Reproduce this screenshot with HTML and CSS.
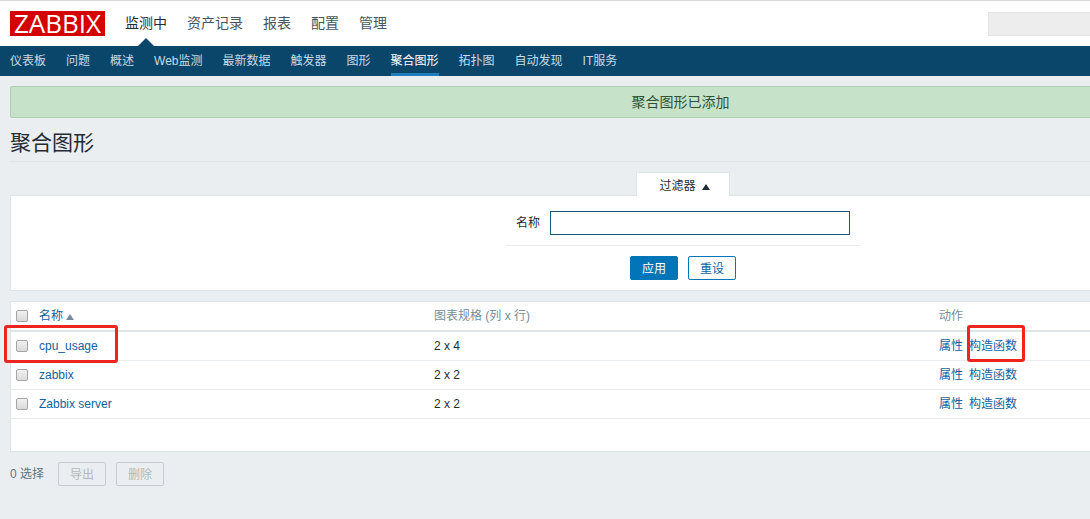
FILE: index.html
```html
<!DOCTYPE html>
<html lang="zh-CN">
<head>
<meta charset="utf-8">
<title>聚合图形</title>
<link rel="stylesheet" href="styles.css">
</head>
<body>
<div class="page">
  <header class="top-bar">
    <a class="logo" href="#">ZABBIX</a>
    <nav class="main-nav">
      <a class="current" href="#">监测中</a>
      <a href="#">资产记录</a>
      <a href="#">报表</a>
      <a href="#">配置</a>
      <a href="#">管理</a>
    </nav>
    <input class="search" type="search" aria-label="搜索">
  </header>
  <nav class="sub-nav">
    <a href="#">仪表板</a>
    <a href="#">问题</a>
    <a href="#">概述</a>
    <a href="#">Web监测</a>
    <a href="#">最新数据</a>
    <a href="#">触发器</a>
    <a href="#">图形</a>
    <a class="selected" href="#">聚合图形</a>
    <a href="#">拓扑图</a>
    <a href="#">自动发现</a>
    <a href="#">IT服务</a>
  </nav>
  <main class="content">
    <div class="message" role="status">聚合图形已添加</div>
    <h1 class="title">聚合图形</h1>
    <section class="filter">
      <button class="filter-tab" type="button">过滤器<span class="arrow-up"></span></button>
      <form class="filter-form">
        <div class="fields">
          <div class="field">
            <label for="name">名称</label>
            <input id="name" type="text">
          </div>
          <div class="filter-actions">
            <button class="btn btn-primary" type="button">应用</button>
            <button class="btn btn-outline" type="button">重设</button>
          </div>
        </div>
      </form>
    </section>
    <div class="list">
      <table class="screens">
        <colgroup><col class="col-check"><col class="col-name"><col class="col-size"><col></colgroup>
        <thead>
          <tr>
            <th><input type="checkbox" aria-label="全选"></th>
            <th><a href="#">名称<span class="arrow-up sort"></span></a></th>
            <th>图表规格 (列 x 行)</th>
            <th>动作</th>
          </tr>
        </thead>
        <tbody>
          <tr>
            <td class="marked"><input type="checkbox" aria-label="cpu_usage"><span class="mark mark-name"></span></td>
            <td><a href="#">cpu_usage</a></td>
            <td>2 x 4</td>
            <td class="marked"><span class="links"><a href="#">属性</a><a href="#">构造函数</a></span><span class="mark mark-action"></span></td>
          </tr>
          <tr>
            <td><input type="checkbox" aria-label="zabbix"></td>
            <td><a href="#">zabbix</a></td>
            <td>2 x 2</td>
            <td><span class="links"><a href="#">属性</a><a href="#">构造函数</a></span></td>
          </tr>
          <tr>
            <td><input type="checkbox" aria-label="Zabbix server"></td>
            <td><a href="#">Zabbix server</a></td>
            <td>2 x 2</td>
            <td><span class="links"><a href="#">属性</a><a href="#">构造函数</a></span></td>
          </tr>
        </tbody>
      </table>
    </div>
    <footer class="list-actions">
      <span class="count">0 选择</span>
      <button class="btn" type="button" disabled>导出</button>
      <button class="btn" type="button" disabled>删除</button>
    </footer>
  </main>
</div>
</body>
</html>
```

FILE: styles.css
```css
* {
  box-sizing: border-box;
}

html {
  overflow-x: hidden;
  background: #ebeef0;
}

body {
  margin: 0;
  overflow-x: hidden;
  color: #1f2c33;
  font: 12px/18px "Liberation Sans", "Noto Sans CJK SC", sans-serif;
}

a {
  color: #0f62a0;
  text-decoration: none;
}

input,
button {
  font: inherit;
}

.page {
  min-width: 1366px;
}

/* Header */
.top-bar {
  display: flex;
  align-items: center;
  height: 46px;
  padding: 0 10px;
  border-top: 1px solid #d8d8d8;
  background: #fff;
}

.logo {
  width: 95px;
  height: 25px;
  background: #d40000;
  color: #fff;
  font: 26px/25px "Open Sans", sans-serif;
  text-align: center;
}

.main-nav {
  display: flex;
  align-self: stretch;
  gap: 20px;
  margin-left: 20px;
  font-size: 14px;
  line-height: 44px;
}

.main-nav a {
  color: #48555c;
}

.main-nav .current {
  position: relative;
  color: #1f2c33;
}

.main-nav .current::after {
  content: "";
  position: absolute;
  bottom: 0;
  left: 50%;
  margin-left: -8px;
  border: 8px solid transparent;
  border-top: 0;
  border-bottom-color: #0a466a;
}

.search {
  width: 270px;
  height: 24px;
  margin-left: auto;
  margin-right: 98px;
  border: 1px solid #e4e4e4;
  border-radius: 0;
  background: #ededed;
}

.sub-nav {
  display: flex;
  gap: 20px;
  height: 30px;
  padding: 0 10px;
  background: #0a466a;
  line-height: 30px;
}

.sub-nav a {
  color: #c8dbe6;
}

.sub-nav .selected {
  border-bottom: 3px solid #1f7fbd;
  color: #fff;
}

/* Content */
.content {
  padding: 10px;
}

.message {
  padding: 6px 15px 6px 10px;
  border: 1px solid #b2cdb5;
  border-radius: 2px;
  background: #c6e3c9;
  color: #2f5033;
  font-size: 14px;
  text-align: center;
}

.title {
  margin: 10px 0;
  padding-bottom: 4px;
  border-bottom: 1px solid #dfe4e7;
  font-size: 21px;
  font-weight: normal;
  line-height: 29px;
}

/* Filter */
.filter {
  display: flex;
  flex-direction: column;
  align-items: center;
  margin-bottom: 10px;
}

.filter-tab {
  z-index: 1;
  height: 24px;
  margin-bottom: -1px;
  padding: 2px 19px 0 22px;
  border: 1px solid #dfe4e7;
  border-bottom: 0;
  background: #fff;
  color: #1f2c33;
}

.arrow-up {
  display: inline-block;
  margin-left: 6px;
  border: 4px solid transparent;
  border-top: 0;
  border-bottom: 6px solid #1f2c33;
}

.filter-form {
  display: flex;
  justify-content: center;
  align-self: stretch;
  padding: 15px 0 10px;
  border: 1px solid #dfe4e7;
  background: #fff;
}

.field {
  display: flex;
  gap: 10px;
  padding: 0 10px 10px;
  border-bottom: 1px solid #e8ecee;
}

.field label {
  line-height: 24px;
}

.field input {
  width: 300px;
  height: 24px;
  border: 1px solid #14587c;
  border-radius: 0;
  background: #fff;
}

.filter-actions {
  display: flex;
  justify-content: center;
  gap: 10px;
  padding-top: 10px;
}

.btn {
  height: 24px;
  padding: 2px 11px 0;
  border: 1px solid #c5cdd2;
  border-radius: 2px;
  background: transparent;
  line-height: 20px;
}

.btn:disabled {
  color: #b0bab9;
}

.btn-primary {
  border-color: #0275b8;
  background: #0275b8;
  color: #fff;
}

.btn-outline {
  border-color: #0275b8;
  color: #0f62a0;
}

/* Table */
.list {
  padding-bottom: 32px;
  border: 1px solid #dfe4e7;
  background: #fff;
}

.screens {
  width: 100%;
  border-collapse: separate;
  border-spacing: 0;
  table-layout: fixed;
}

.col-check {
  width: 23px;
}

.col-name {
  width: 395px;
}

.col-size {
  width: 505px;
}

.screens th,
.screens td {
  padding: 5px;
  border-bottom: 1px solid #e8ecee;
  font-weight: normal;
  text-align: left;
}

.screens th {
  border-bottom: 2px solid #dfe4e7;
  color: #768d99;
}

.screens input {
  display: block;
  appearance: none;
  width: 12px;
  height: 12px;
  margin: 0;
  border: 1px solid #a5a5a5;
  border-radius: 2px;
  background: linear-gradient(#f0f0f0, #dadada);
}

.sort {
  margin-left: 3px;
  border-bottom-color: #768d99;
}

.links {
  display: flex;
  gap: 6px;
}

.marked {
  position: relative;
}

/* Highlight frames drawn over the table */
.mark {
  position: absolute;
  border: 3px solid #f0241f;
  border-radius: 3px;
  pointer-events: none;
}

.mark-name {
  top: -7px;
  left: -7px;
  width: 114px;
  height: 38px;
}

.mark-action {
  top: -7px;
  left: 33px;
  width: 58px;
  height: 37px;
}

.list-actions {
  display: flex;
  align-items: center;
  gap: 10px;
  padding-top: 10px;
}

.count {
  margin-right: 4px;
  color: #5f7480;
}
```
